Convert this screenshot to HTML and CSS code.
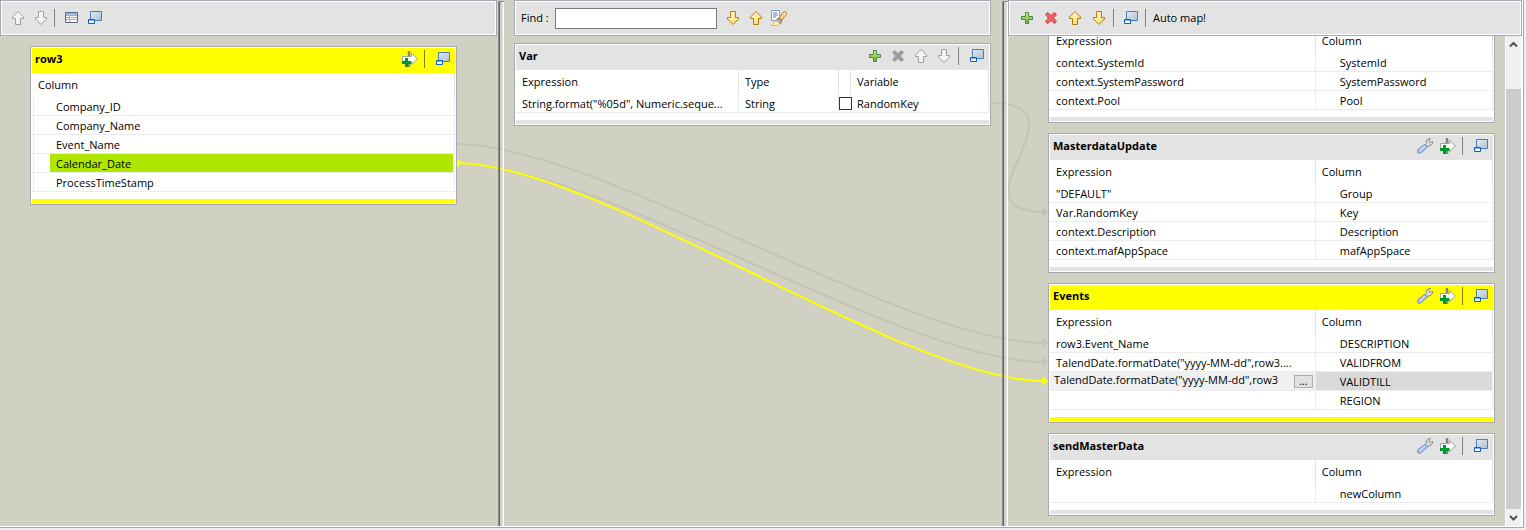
FILE: index.html
```html
<!DOCTYPE html>
<html lang="en">
<head>
<meta charset="utf-8">
<title>Map editor</title>
<link rel="stylesheet" href="styles.css">
</head>
<body>
<svg class="defs" aria-hidden="true">
  <defs>
    <linearGradient id="g-gold" x1="0" y1="0" x2="1" y2="1"><stop offset="0" stop-color="#fffbe2"/><stop offset="1" stop-color="#fbd65c"/></linearGradient>
    <linearGradient id="g-green" x1="0" y1="0" x2="0" y2="1"><stop offset="0" stop-color="#d6ec7c"/><stop offset="1" stop-color="#6fb02c"/></linearGradient>
    <linearGradient id="g-win" x1="0" y1="0" x2="1" y2="1"><stop offset="0" stop-color="#e4eaf2"/><stop offset="1" stop-color="#aebfd3"/></linearGradient>
  </defs>
  <symbol id="i-up" viewBox="0 0 16 16"><path d="M8 1.500L13.500 7v1.500h-3v6h-5v-6h-3V7z"/></symbol>
  <symbol id="i-down" viewBox="0 0 16 16"><path d="M8 14.500L13.500 9V7.500h-3v-6h-5v6h-3V9z"/></symbol>
  <symbol id="i-plus" viewBox="0 0 16 16"><path d="M6.500 2.500h3v4h4v3h-4v4h-3v-4h-4v-3h4z" fill="url(#g-green)" stroke="#3f8a52"/></symbol>
  <symbol id="i-cross" viewBox="0 0 16 16"><path d="M4.500 2.500L8 5.500l3.500-3 2 2L10.500 8l3 3.500-2 2L8 10.500l-3.500 3-2-2L5.500 8l-3-3.500z"/></symbol>
  <symbol id="i-table" viewBox="0 0 16 16"><path d="M1.500 2.500h12v10h-12z" fill="#fff" stroke="#56698e"/><path d="M2 3h11v2H2z" fill="#a9bbd8"/><path d="M2 5.500h11M2 7.500h11M2 9.500h11M5.500 5v7" stroke="#a3afc4" fill="none"/></symbol>
  <symbol id="i-window" viewBox="0 0 16 16"><path d="M3.500 1.500h11v9h-11z" fill="url(#g-win)" stroke="#4a7ebb"/><path d="M1.500 9.500h6v4h-6z" fill="#fff" stroke="#0a5fcc"/><path d="M2 10h5" stroke="#0a5fcc"/></symbol>
  <symbol id="i-addout" viewBox="0 0 16 16"><path d="M7 0v16" stroke="#858585" stroke-width="2.500"/><path d="M.500 5.500h9V2.500L15.500 8 9.500 13.500v-3h-9z" fill="#fff" stroke="#a2a2a2"/><path d="M3 7h3v3h3v3H6v3H3v-3H0v-3h3z" fill="#009a2b"/></symbol>
  <symbol id="i-wrench" viewBox="0 0 16 16"><path d="M8 7l1.500-1.500L9 3 11.500.500h2L12 2.500l.500 1.500 1.500.500L15.500 3v2.500L13 8h-2L9.500 9z" fill="#d8d8d8" stroke="#8b8b8b"/><path d="M7.500 6.500L1 11.500q-1.500 2 0 3.500 1.500 1 3.500-.500L10.500 9z" fill="#a9c4f0" stroke="#6d92cf"/><path d="M3 12.500l5-4.500" stroke="#dce8fb"/></symbol>
  <symbol id="i-brush" viewBox="0 0 16 16"><path d="M.500.500h8v10h-8z" fill="#fff" stroke="#8a9bc0"/><path d="M2 3h4M2 5h5M2 7h3" stroke="#5b78b8"/><path d="M8 8l4-5.500q3-2 3.500.500.500 2-2 3.500L11 10z" fill="#fbd27a" stroke="#c0802a"/><circle cx="13.500" cy="4" r="1" fill="#fff"/><path d="M7 8l4 3-2 3-4-3z" fill="#b3b3bb" stroke="#75757d"/><path d="M5 10.500l3.500 3L7 15.500H.500z" fill="#fff2bd" stroke="#e0b060"/></symbol>
</svg>

<main class="editor">
  <svg class="links" viewBox="0 0 1524 527" preserveAspectRatio="none" aria-hidden="true">
    <g class="link">
      <path d="M457 144C597 144 904 343 1044 343"/>
      <path d="M457 163C597 163 904 362 1044 362"/>
      <path d="M991 103C1096 103 944 212 1046 212"/>
      <path class="head" d="M1043 338l6 5-6 5zM1043 357l6 5-6 5zM1043 207l6 5-6 5z"/>
    </g>
    <g class="link active">
      <path d="M457 163C597 163 904 381 1044 381"/>
      <path class="head" d="M1043 376l6 5-6 5zM457 158l5 5-5 5z"/>
    </g>
  </svg>

  <section class="pane inputs">
    <div class="toolbar">
      <button class="tool off" aria-label="Move up"><svg><use href="#i-up"/></svg></button>
      <button class="tool off" aria-label="Move down"><svg><use href="#i-down"/></svg></button>
      <span class="sep"></span>
      <button class="tool" aria-label="Properties"><svg><use href="#i-table"/></svg></button>
      <button class="tool" aria-label="Minimize all"><svg><use href="#i-window"/></svg></button>
    </div>
    <div class="stage">
      <article class="card active">
        <header class="title"><h2>row3</h2>
          <button class="tool" aria-label="Add output"><svg><use href="#i-addout"/></svg></button>
          <span class="sep"></span>
          <button class="tool" aria-label="Minimize"><svg><use href="#i-window"/></svg></button>
        </header>
        <table class="grid source">
          <thead><tr><th>Column</th></tr></thead>
          <tbody>
            <tr><td>Company_ID</td></tr>
            <tr><td>Company_Name</td></tr>
            <tr><td>Event_Name</td></tr>
            <tr class="picked"><td><span>Calendar_Date</span></td></tr>
            <tr><td>ProcessTimeStamp</td></tr>
          </tbody>
        </table>
        <footer class="foot"></footer>
      </article>
    </div>
  </section>

  <div class="splitter"></div>

  <section class="pane vars">
    <div class="toolbar">
      <label for="find">Find :</label>
      <input id="find" class="find" type="text">
      <button class="tool gold" aria-label="Find next"><svg><use href="#i-down"/></svg></button>
      <button class="tool gold" aria-label="Find previous"><svg><use href="#i-up"/></svg></button>
      <button class="tool" aria-label="Highlight all"><svg><use href="#i-brush"/></svg></button>
    </div>
    <article class="card">
      <header class="title"><h2>Var</h2>
        <button class="tool" aria-label="Add variable"><svg><use href="#i-plus"/></svg></button>
        <button class="tool dim" aria-label="Remove variable"><svg><use href="#i-cross"/></svg></button>
        <button class="tool off" aria-label="Move up"><svg><use href="#i-up"/></svg></button>
        <button class="tool off" aria-label="Move down"><svg><use href="#i-down"/></svg></button>
        <span class="sep"></span>
        <button class="tool" aria-label="Minimize"><svg><use href="#i-window"/></svg></button>
      </header>
      <table class="grid">
        <colgroup><col class="w-expr"><col class="w-type"><col class="w-check"><col></colgroup>
        <thead><tr><th>Expression</th><th>Type</th><th></th><th>Variable</th></tr></thead>
        <tbody><tr><td>String.format("%05d", Numeric.seque...</td><td>String</td><td class="tick"><input type="checkbox" aria-label="Nullable RandomKey"></td><td>RandomKey</td></tr></tbody>
      </table>
      <footer class="foot"></footer>
    </article>
  </section>

  <div class="splitter"></div>

  <section class="pane outputs">
    <div class="toolbar">
      <button class="tool" aria-label="Add output table"><svg><use href="#i-plus"/></svg></button>
      <button class="tool red" aria-label="Remove output table"><svg><use href="#i-cross"/></svg></button>
      <button class="tool gold" aria-label="Move up"><svg><use href="#i-up"/></svg></button>
      <button class="tool gold" aria-label="Move down"><svg><use href="#i-down"/></svg></button>
      <span class="sep"></span>
      <button class="tool" aria-label="Minimize all"><svg><use href="#i-window"/></svg></button>
      <span class="sep"></span>
      <button class="automap">Auto map!</button>
    </div>
    <div class="scroller">
      <div class="stack">
        <article class="card">
          <table class="grid target">
            <colgroup><col class="w-left"><col></colgroup>
            <thead><tr><th>Expression</th><th>Column</th></tr></thead>
            <tbody>
              <tr><td>context.SystemId</td><td>SystemId</td></tr>
              <tr><td>context.SystemPassword</td><td>SystemPassword</td></tr>
              <tr><td>context.Pool</td><td>Pool</td></tr>
            </tbody>
          </table>
          <footer class="foot"></footer>
        </article>

        <article class="card">
          <header class="title"><h2>MasterdataUpdate</h2>
            <button class="tool" aria-label="Settings"><svg><use href="#i-wrench"/></svg></button>
            <button class="tool" aria-label="Add filter"><svg><use href="#i-addout"/></svg></button>
            <span class="sep"></span>
            <button class="tool" aria-label="Minimize"><svg><use href="#i-window"/></svg></button>
          </header>
          <table class="grid target">
            <colgroup><col class="w-left"><col></colgroup>
            <thead><tr><th>Expression</th><th>Column</th></tr></thead>
            <tbody>
              <tr><td>"DEFAULT"</td><td>Group</td></tr>
              <tr><td>Var.RandomKey</td><td>Key</td></tr>
              <tr><td>context.Description</td><td>Description</td></tr>
              <tr><td>context.mafAppSpace</td><td>mafAppSpace</td></tr>
            </tbody>
          </table>
          <footer class="foot"></footer>
        </article>

        <article class="card active">
          <header class="title"><h2>Events</h2>
            <button class="tool" aria-label="Settings"><svg><use href="#i-wrench"/></svg></button>
            <button class="tool" aria-label="Add filter"><svg><use href="#i-addout"/></svg></button>
            <span class="sep"></span>
            <button class="tool" aria-label="Minimize"><svg><use href="#i-window"/></svg></button>
          </header>
          <table class="grid target">
            <colgroup><col class="w-left"><col></colgroup>
            <thead><tr><th>Expression</th><th>Column</th></tr></thead>
            <tbody>
              <tr><td>row3.Event_Name</td><td>DESCRIPTION</td></tr>
              <tr><td>TalendDate.formatDate("yyyy-MM-dd",row3....</td><td>VALIDFROM</td></tr>
              <tr class="editing"><td><div class="editbox"><input type="text" aria-label="Expression for VALIDTILL" value="TalendDate.formatDate(&quot;yyyy-MM-dd&quot;,row3"><button>...</button></div></td><td>VALIDTILL</td></tr>
              <tr><td></td><td>REGION</td></tr>
            </tbody>
          </table>
          <footer class="foot"></footer>
        </article>

        <article class="card">
          <header class="title"><h2>sendMasterData</h2>
            <button class="tool" aria-label="Settings"><svg><use href="#i-wrench"/></svg></button>
            <button class="tool" aria-label="Add filter"><svg><use href="#i-addout"/></svg></button>
            <span class="sep"></span>
            <button class="tool" aria-label="Minimize"><svg><use href="#i-window"/></svg></button>
          </header>
          <table class="grid target">
            <colgroup><col class="w-left"><col></colgroup>
            <thead><tr><th>Expression</th><th>Column</th></tr></thead>
            <tbody><tr><td></td><td>newColumn</td></tr></tbody>
          </table>
          <footer class="foot"></footer>
        </article>
      </div>
      <div class="scrollbar">
        <button aria-label="Scroll up"><svg viewBox="0 0 15 17"><path d="M4 10.500L7.500 7l3.500 3.500"/></svg></button>
        <div class="track"><div class="thumb"></div></div>
        <button aria-label="Scroll down"><svg viewBox="0 0 15 17"><path d="M4 7l3.500 3.500L11 7"/></svg></button>
      </div>
    </div>
  </section>
</main>
</body>
</html>
```
FILE: styles.css
```css
* { box-sizing: border-box; }

body {
  margin: 0;
  height: 100vh;
  padding: 0 2px 2px 0;
  background: #f0f0f0;
  color: #000;
  font: 11px/18px "Open Sans", "Noto Sans", sans-serif;
  overflow: hidden;
}

button, input { font: inherit; color: inherit; }
.defs { position: absolute; width: 0; height: 0; }

.editor {
  position: relative;
  display: grid;
  grid-template-columns: 497fr 7px 497fr 7px 514fr;
  grid-template-rows: minmax(0, 1fr);
  height: 100%;
  padding: 0 1px 1px 0;
  border: solid #a9a9ac;
  border-width: 0 1px 1px 0;
  background: #d1d1c3;
  box-shadow: inset -1px -1px #fff;
}

/* connection lines between the tables */
.links { position: absolute; inset: 0; width: 100%; height: 100%; z-index: 0; }
.link path { fill: none; stroke: #c4c4b5; stroke-width: 2; }
.link .head { fill: #c4c4b5; stroke: none; }
.link.active path { stroke: #ff0; }
.link.active .head { fill: #ff0; stroke: none; }

.pane { display: flex; flex-direction: column; min-width: 0; z-index: 1; }
.vars { padding: 0 10px; gap: 7px; }
.stage { padding: 10px 40px 0 30px; }

.splitter {
  margin: 1px 0 0 1px;
  border: solid #8c8c8a;
  border-width: 1px 0 0 1px;
  box-shadow: inset 1px 0 #626266, inset -1px 0 #fff, inset -2px 0 #e3e3e3;
  z-index: 1;
}

.toolbar {
  display: flex;
  align-items: center;
  flex: none;
  height: 36px;
  padding: 0 6px;
  border: 1px solid #a9a9b1;
  background: #e3e3e3;
  box-shadow: inset 0 0 0 1px #fff;
}
.inputs .toolbar { padding-left: 5px; }
.outputs .tool { width: 24px; }
.outputs .title .tool { width: 23px; }

.tool {
  display: grid;
  place-items: center;
  flex: none;
  width: 23px;
  height: 22px;
  padding: 0;
  border: 0;
  background: none;
}
.tool svg { width: 16px; height: 16px; fill: none; }
.tool.off { fill: #f4f4f4; stroke: #a0a0a0; }
.tool.gold { fill: url(#g-gold); stroke: #b37a12; }
.tool.red { fill: #ee6464; stroke: #d23c3c; }
.tool.dim { fill: #a0a0a0; stroke: #a0a0a0; }
.tool.off svg, .tool.gold svg, .tool.red svg, .tool.dim svg { fill: inherit; }

.sep { flex: none; width: 1px; height: 18px; margin: 0 5px 0 2px; background: #808080; }
.title .sep { margin: 0 6px 0 3px; }
.active .title .sep { background: #808000; }

.find { width: 162px; height: 21px; margin: 0 5px 0 6px; padding: 0 4px; border: 1px solid #7a7a7a; background: #fff; }
.automap { padding: 0; border: 0; background: none; margin-left: 2px; }

.card { flex: none; padding: 1px; border: 1px solid #a9a9b1; background: #fff; }
.title { display: flex; align-items: center; height: 25px; padding: 0 1px 3px 3px; background: #e3e3e3; }
.title h2 { flex: 1; margin: 0; font-size: 11px; line-height: 22px; font-weight: 700; }
.active .title, .active .foot { background: #ff0; }
.foot { height: 4px; margin-top: 7px; background: #e3e3e3; }

.grid { width: 100%; table-layout: fixed; border-collapse: separate; border-spacing: 0; line-height: 17px; }
.grid th, .grid td {
  height: 19px;
  padding: 1px 0 0 6px;
  border-right: 1px solid #e9eef6;
  border-bottom: 1px solid #ececef;
  text-align: left;
  font-weight: 400;
  white-space: nowrap;
  overflow: hidden;
}
.grid th { height: 24px; padding: 0 0 1px 6px; border-right-color: #e3e3e3; border-bottom: 0; }
.w-expr { width: 223px; }
.w-type { width: 100px; }
.w-check { width: 12px; }
.w-left { width: 60%; }
.grid.target td:last-child { padding-left: 24px; }
.grid.source td { padding-left: 24px; background: linear-gradient(#ececef, #ececef) 1px 0 / 1px 100% no-repeat; }

.grid .picked td { padding-top: 0; }
.picked span { display: block; margin: 0 1px 0 -6px; padding: 1px 0 0 6px; background: #b0e700; }

.grid .tick { padding: 0; overflow: visible; }
.tick input {
  appearance: none;
  display: block;
  width: 13px;
  height: 13px;
  margin: 0;
  border: 1px solid #333;
  background: #fff;
}

.grid .editing td { background: #d9d9d9; }
.grid .editing td:first-child { padding: 0; background: #f0f0f0; }
.editbox { display: flex; align-items: center; height: 18px; padding-right: 2px; }
.editbox input { flex: 1; min-width: 0; height: 18px; padding: 0 0 3px 4px; border: 0; background: none; }
.editbox button { width: 19px; height: 13px; margin-left: 4px; padding: 0; border: 1px solid #adadad; background: #e1e1e1; line-height: 6px; }

.scroller { display: flex; flex: 1; min-height: 0; }
.stack {
  display: flex;
  flex: 1;
  flex-direction: column;
  justify-content: flex-end;
  gap: 10px;
  min-width: 0;
  padding: 0 10px 10px 40px;
  overflow: hidden;
}
.scrollbar { display: flex; flex-direction: column; flex: none; width: 17px; border: solid #fff; border-width: 0 1px; background: #f0f0f0; }
.scrollbar button { height: 17px; padding: 0; border: 0; background: none; }
.scrollbar svg { display: block; width: 15px; height: 17px; fill: none; stroke: #505050; stroke-width: 2; }
.track { display: flex; flex: 1; flex-direction: column; justify-content: flex-end; }
.thumb { height: 92%; background: #cdcdcd; }
```
